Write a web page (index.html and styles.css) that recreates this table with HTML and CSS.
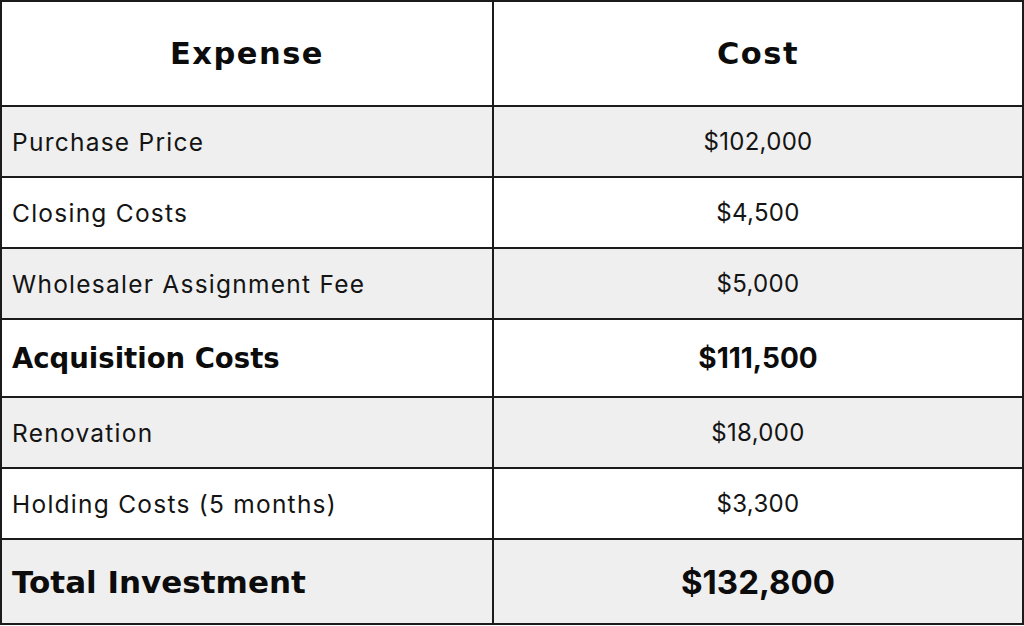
FILE: index.html
```html
<!DOCTYPE html>
<html lang="en">
<head>
<meta charset="utf-8">
<title>Investment Breakdown</title>
<link rel="stylesheet" href="styles.css">
</head>
<body>
<table class="costs">
  <thead>
    <tr class="row-head">
      <th class="col-expense">Expense</th>
      <th class="col-cost">Cost</th>
    </tr>
  </thead>
  <tbody>
    <tr class="row shade"><td class="label">Purchase Price</td><td class="value">$102,000</td></tr>
    <tr class="row"><td class="label">Closing Costs</td><td class="value">$4,500</td></tr>
    <tr class="row shade"><td class="label">Wholesaler Assignment Fee</td><td class="value">$5,000</td></tr>
    <tr class="row subtotal"><td class="label">Acquisition Costs</td><td class="value">$111,500</td></tr>
    <tr class="row shade"><td class="label">Renovation</td><td class="value">$18,000</td></tr>
    <tr class="row"><td class="label">Holding Costs (5 months)</td><td class="value">$3,300</td></tr>
    <tr class="row total shade"><td class="label">Total Investment</td><td class="value">$132,800</td></tr>
  </tbody>
</table>
</body>
</html>
```
FILE: styles.css
```css
html, body {
  margin: 0;
  padding: 0;
  background: #ffffff;
}
body {
  font-family: "Inter", "Liberation Sans", sans-serif;
  color: #141414;
}
.costs {
  width: 1024px;
  border-collapse: collapse;
  table-layout: fixed;
}
.costs th,
.costs td {
  border: 2px solid #1b1b1b;
  padding: 0 10px;
  vertical-align: middle;
}
.col-expense { width: 470px; }
.row-head { height: 105px; }
.row-head th {
  font-family: "DejaVu Sans", "Inter", sans-serif;
  font-size: 30.5px;
  font-weight: 700;
  letter-spacing: 1.5px;
  text-align: center;
  color: #0c0c0c;
}
.row { height: 71px; }
.shade { background: #efefef; }
.label {
  font-size: 24.5px;
  font-weight: 400;
  letter-spacing: 1.25px;
  text-align: left;
}
.value {
  font-size: 24px;
  font-weight: 400;
  letter-spacing: 0.3px;
  text-align: center;
}
.subtotal { height: 78px; }
.subtotal .label,
.subtotal .value {
  font-weight: 700;
  letter-spacing: 0;
  color: #0c0c0c;
}
.subtotal .label {
  font-family: "DejaVu Sans", "Inter", sans-serif;
  font-size: 27.5px;
}
.subtotal .value { font-size: 28px; }
.total { height: 85px; }
.total .label,
.total .value {
  font-weight: 700;
  letter-spacing: 0;
  color: #0c0c0c;
}
.total .label {
  font-family: "DejaVu Sans", "Inter", sans-serif;
  font-size: 31px;
}
.total .value { font-size: 33px; }
```
